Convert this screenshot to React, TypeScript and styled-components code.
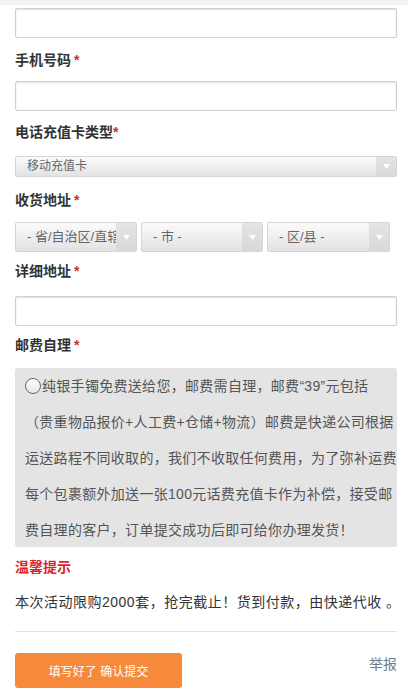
import React from "react";
import styled, { createGlobalStyle } from "styled-components";

const GlobalStyle = createGlobalStyle`
    html, body {
        margin: 0;
        padding: 0;
        background: #fff;
    }
    body {
        font-family: "Liberation Sans", "Noto Sans CJK SC", sans-serif;
        color: #333;
    }
`;

const Page = styled.div`
    width: 408px;
    .top-strip {
        height: 5px;
        background: #f3f3f3;
        margin-bottom: 3px;
    }
`;

const Form = styled.div`
    padding: 0 11px 0 15px;
`;

const Label = styled.div<{ $pt?: number; $pb?: number }>`
    font-size: 14px;
    font-weight: bold;
    line-height: 20px;
    color: #333;
    padding-top: ${({ $pt }) => ($pt ?? 11)}px;
    padding-bottom: ${({ $pb }) => ($pb ?? 12)}px;
    .star {
        color: #c9302c;
        margin-left: 3px;
    }
    .star.tight {
        margin-left: 0;
    }
`;

const TextInput = styled.div`
    height: 30px;
    box-sizing: border-box;
    border: 1px solid #cfcfcf;
    border-radius: 2px;
    background: #fff;
    box-shadow: inset 0 1px 2px rgba(0, 0, 0, 0.12);
`;

const Select = styled.div<{ $height: number; $width?: number; $fontSize: number }>`
    display: flex;
    align-items: stretch;
    height: ${({ $height }) => $height}px;
    width: ${({ $width }) => ($width ? `${$width}px` : "100%")};
    box-sizing: border-box;
    border: 1px solid #d6d6d6;
    border-radius: 2px;
    background: linear-gradient(#fbfbfb, #e2e2e2);
    overflow: hidden;
    .select-text {
        flex: 1;
        min-width: 0;
        padding-left: 11px;
        font-size: ${({ $fontSize }) => $fontSize}px;
        line-height: ${({ $height }) => $height - 2}px;
        color: #666;
        white-space: nowrap;
        overflow: hidden;
    }
    .select-arrow {
        width: 20px;
        display: flex;
        align-items: center;
        justify-content: center;
        background: linear-gradient(#e4e4e4, #d8d8d8);
    }
`;

const SelectRow = styled.div`
    display: flex;
    gap: 4px;
`;

const NoticeBox = styled.div`
    background: #e4e4e4;
    border-radius: 3px;
    padding: 0 0 0 10px;
    height: 179px;
    font-size: 14px;
    line-height: 36px;
    color: #555;
    letter-spacing: 0.3px;
    white-space: nowrap;
    overflow: hidden;
    .radio {
        display: inline-block;
        width: 14px;
        height: 14px;
        border: 1px solid #666;
        border-radius: 50%;
        background: linear-gradient(#fff, #e6e6e6);
        vertical-align: -3px;
        margin-right: 1px;
    }
`;

const TipTitle = styled.div`
    color: #d8262b;
    font-size: 14px;
    font-weight: bold;
    line-height: 20px;
    padding-top: 10px;
`;

const TipText = styled.div`
    font-size: 14px;
    line-height: 20px;
    color: #333;
    padding-top: 15px;
    letter-spacing: 0.5px;
    white-space: nowrap;
`;

const Divider = styled.div`
    height: 1px;
    background: #e2e2e2;
    margin: 19px 0 21px;
`;

const Footer = styled.div`
    display: flex;
    justify-content: space-between;
    align-items: flex-start;
`;

const SubmitButton = styled.button`
    width: 167px;
    height: 35px;
    border: none;
    border-radius: 3px;
    background: #f7893a;
    color: #fff;
    font-family: inherit;
    font-size: 12px;
    cursor: pointer;
`;

const ReportLink = styled.a`
    font-size: 14px;
    line-height: 20px;
    margin-top: 1px;
    color: #6d7b8d;
    text-decoration: none;
`;

const Arrow = () => (
    <svg width="7" height="5" viewBox="0 0 7 5">
        <path d="M0 0 L7 0 L3.5 5 Z" fill="#fff" />
    </svg>
);

const Star = ({ tight }: { tight?: boolean }) => (
    <span className={tight ? "star tight" : "star"}>*</span>
);

export default function App() {
    return (
        <Page>
            <GlobalStyle />
            <div className="top-strip" />
            <Form>
                <TextInput />
                <Label $pt={12} $pb={11}>
                    手机号码
                    <Star />
                </Label>
                <TextInput />
                <Label $pt={11} $pb={14}>
                    电话充值卡类型
                    <Star tight />
                </Label>
                <Select $height={21} $fontSize={12}>
                    <span className="select-text">移动充值卡</span>
                    <span className="select-arrow">
                        <Arrow />
                    </span>
                </Select>
                <Label $pt={13} $pb={12}>
                    收货地址
                    <Star />
                </Label>
                <SelectRow>
                    {["- 省/自治区/直辖市 -", "- 市 -", "- 区/县 -"].map((t, i) => (
                        <Select key={t} $height={30} $width={i === 2 ? 123 : 122} $fontSize={13}>
                            <span className="select-text">{t}</span>
                            <span className="select-arrow">
                                <Arrow />
                            </span>
                        </Select>
                    ))}
                </SelectRow>
                <Label $pt={9} $pb={15}>
                    详细地址
                    <Star />
                </Label>
                <TextInput />
                <Label $pt={9} $pb={13}>
                    邮费自理
                    <Star />
                </Label>
                <NoticeBox>
                    <span className="radio" />
                    纯银手镯免费送给您，邮费需自理，邮费“39”元包括
                    <br />
                    （贵重物品报价+人工费+仓储+物流）邮费是快递公司根据
                    <br />
                    运送路程不同收取的，我们不收取任何费用，为了弥补运费
                    <br />
                    每个包裹额外加送一张100元话费充值卡作为补偿，接受邮
                    <br />
                    费自理的客户，订单提交成功后即可给你办理发货！
                </NoticeBox>
                <TipTitle>温馨提示</TipTitle>
                <TipText>本次活动限购2000套，抢完截止！货到付款，由快递代收 。</TipText>
                <Divider />
                <Footer>
                    <SubmitButton>填写好了 确认提交</SubmitButton>
                    <ReportLink href="#">举报</ReportLink>
                </Footer>
            </Form>
        </Page>
    );
}
